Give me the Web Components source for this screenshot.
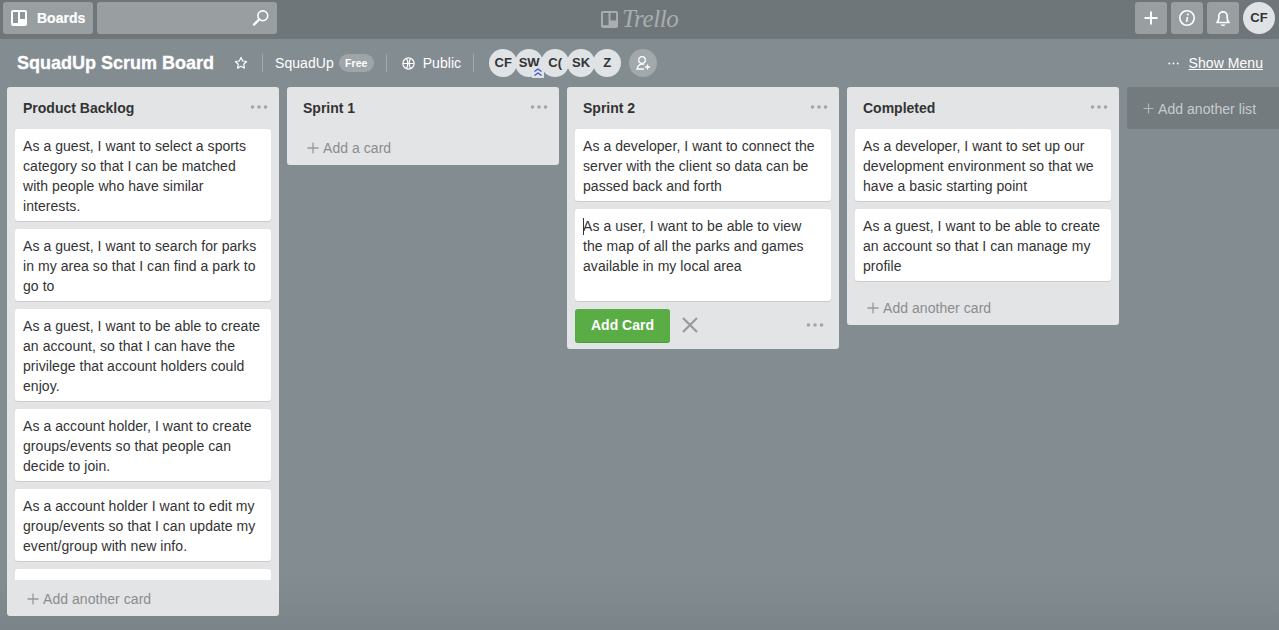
<!DOCTYPE html>
<html lang="en"><head><meta charset="utf-8"><title>SquadUp Scrum Board</title>
<style>
html,body{margin:0;padding:0;height:100%}
body{width:1279px;height:630px;overflow:hidden;background:#838c91;font:14px/20px "Liberation Sans",Arial,sans-serif;color:#333;display:flex;flex-direction:column}
</style></head><body>
<top-bar></top-bar>
<board-header></board-header>
<board-canvas>
  <board-list name="Product Backlog" fill>
    <board-card>As a guest, I want to select a sports category so that I can be matched with people who have similar interests.</board-card>
    <board-card>As a guest, I want to search for parks in my area so that I can find a park to go to</board-card>
    <board-card>As a guest, I want to be able to create an account, so that I can have the privilege that account holders could enjoy.</board-card>
    <board-card>As a account holder, I want to create groups/events so that people can decide to join.</board-card>
    <board-card>As a account holder I want to edit my group/events so that I can update my event/group with new info.</board-card>
    <board-card blank></board-card>
  </board-list>
  <board-list name="Sprint 1" add="Add a card"></board-list>
  <board-list name="Sprint 2" composing>
    <board-card>As a developer, I want to connect the server with the client so data can be passed back and forth</board-card>
    <board-card editing>As a user, I want to be able to view the map of all the parks and games available in my local area</board-card>
  </board-list>
  <board-list name="Completed">
    <board-card>As a developer, I want to set up our development environment so that we have a basic starting point</board-card>
    <board-card>As a guest, I want to be able to create an account so that I can manage my profile</board-card>
  </board-list>
  <add-list></add-list>
</board-canvas>
<script>
function el(name, css, html){
  customElements.define(name, class extends HTMLElement{
    constructor(){super();this.attachShadow({mode:'open'});}
    connectedCallback(){
      const h = typeof html==='function'?html(this):html;
      this.shadowRoot.innerHTML='<style>'+css+'</style>'+h;
    }
  });
}
el('user-avatar',`
:host{display:flex;align-items:center;justify-content:center;box-sizing:border-box;width:var(--s,28px);height:var(--s,28px);border-radius:50%;background:#dfe3e6;color:#333;font:700 13px/20px "Liberation Sans",sans-serif;position:relative;flex:none}
svg{position:absolute;right:-1px;bottom:-1px;width:12px;height:12px}
`,t=>`<span>${t.getAttribute('i')}</span>`+(t.hasAttribute('admin')?`<svg viewBox="0 0 12 12" fill="none" stroke="#3d4fc4" stroke-width="1.2"><rect width="12" height="12" fill="#dfe3e6" stroke="none"/><path d="M2.5 5.5 6 3l3.5 2.5M2.5 9.5 6 7l3.5 2.5"/></svg>`:''));

el('top-bar',`
:host{display:flex;align-items:center;flex:none;box-sizing:border-box;height:39px;padding:0 4px 4px 3px;background:#6e7679;gap:4px;position:relative;color:#fff}
.btn{display:flex;align-items:center;justify-content:center;height:32px;width:32px;border-radius:3px;background:rgba(255,255,255,.3);flex:none}
.boards{width:90px;justify-content:flex-start;box-sizing:border-box;padding-left:8px;gap:10px;font:700 14px/20px "Liberation Sans",sans-serif;-webkit-text-stroke:.2px #fff}
.search{width:180px;justify-content:flex-end;box-sizing:border-box;padding-right:7px}
.logo{position:absolute;left:601px;top:6px;display:flex;align-items:center;gap:4px;color:rgba(255,255,255,.42);font:italic 400 25px/26px "Liberation Serif",serif;letter-spacing:-.4px}
.spacer{flex:1}
svg{display:block}
user-avatar{--s:32px}
`,`
<div class="btn boards"><svg width="16" height="16" viewBox="0 0 16 16"><rect width="16" height="16" rx="2" fill="#fff"/><rect x="2" y="2" width="5" height="11" fill="#8e9699"/><rect x="9" y="2" width="5" height="7" fill="#8e9699"/></svg><span>Boards</span></div>
<div class="btn search"><svg width="18" height="18" viewBox="0 0 18 18" fill="none" stroke="#fff"><circle cx="10.8" cy="6.8" r="4.9" stroke-width="1.6"/><path d="M7.2 10.4 2 15.6" stroke-width="2.2" stroke-linecap="round"/></svg></div>
<div class="logo"><svg width="17" height="17" viewBox="0 0 18 18"><rect width="18" height="18" rx="2" fill="currentColor"/><rect x="2" y="2" width="6" height="13" fill="#6e7679"/><rect x="10" y="2" width="6" height="8" fill="#6e7679"/></svg><span>Trello</span></div>
<div class="spacer"></div>
<div class="btn"><svg width="16" height="16" viewBox="0 0 16 16"><path d="M8 1.500v13M1.500 8h13" stroke="#fff" stroke-width="2" fill="none"/></svg></div>
<div class="btn"><svg width="18" height="18" viewBox="0 0 18 18" fill="none" stroke="#fff"><circle cx="9" cy="9" r="7.200" stroke-width="1.600"/><path d="M9.500 8 8.600 12.800" stroke-width="1.600"/><circle cx="9.900" cy="5.600" r="1" fill="#fff" stroke="none"/></svg></div>
<div class="btn"><svg width="16" height="18" viewBox="0 0 16 18" fill="none" stroke="#fff" stroke-width="1.700"><path d="M2 13.500c1.300-1 1.800-2.400 1.800-4.500V7a4.200 4.200 0 0 1 8.400 0v2c0 2.100.5 3.500 1.800 4.500z" stroke-linejoin="round"/><path d="M6.300 15.500c.4 1 3 1 3.400 0" stroke-width="1.500"/></svg></div>
<user-avatar i="CF"></user-avatar>
`);

el('board-header',`
:host{display:flex;align-items:center;flex:none;height:48px;color:#fff;font:14px/20px "Liberation Sans",sans-serif;letter-spacing:.05px}
h1{margin:0 0 0 17px;font:700 18px/24px "Liberation Sans",sans-serif;width:197px;white-space:nowrap;letter-spacing:0;-webkit-text-stroke:.3px #fff}
.star{margin-left:20px;width:14px;height:14px;display:block}
.div{width:1px;height:18px;background:rgba(255,255,255,.25);flex:none}
.team{margin-left:12px}
.free{margin-left:5px;width:35px;height:18px;border-radius:9px;background:rgba(255,255,255,.22);font:700 10.5px/18px "Liberation Sans",sans-serif;text-align:center}
.globe{margin:0 8px 0 15px;display:block}
.avatars{display:flex;margin-left:15px}
.avatars user-avatar+user-avatar{margin-left:-2px}
.addm{margin-left:8px;width:28px;height:28px;border-radius:50%;background:rgba(255,255,255,.25);display:flex;align-items:center;justify-content:center}
.spacer{flex:1}
.more{margin-right:10px;display:block}
.menu{margin-right:16px;text-decoration:underline}
`,`
<h1>SquadUp Scrum Board</h1>
<svg class="star" viewBox="0 0 14 14" fill="none" stroke="#fff" stroke-width="1.200"><path d="M7 1.400 8.700 5l3.900.5-2.900 2.700.8 3.900L7 10.200l-3.500 1.900.8-3.900L1.400 5.500 5.300 5z" stroke-linejoin="round"/></svg>
<div class="div" style="margin-left:14px"></div>
<span class="team">SquadUp</span><span class="free">Free</span>
<div class="div" style="margin-left:12px"></div>
<svg class="globe" width="13" height="13" viewBox="0 0 13 13" fill="none" stroke="#fff" stroke-width="1.200"><circle cx="6.500" cy="6.500" r="5.600"/><path d="M.9 6.500h11.200M4.500 1.300c1.500 3 1.500 7.400 0 10.400M8.500 1.300c-1.500 3-1.500 7.400 0 10.400"/></svg>
<span>Public</span>
<div class="div" style="margin-left:12px"></div>
<div class="avatars"><user-avatar i="CF"></user-avatar><user-avatar i="SW" admin></user-avatar><user-avatar i="C("></user-avatar><user-avatar i="SK"></user-avatar><user-avatar i="Z"></user-avatar></div>
<div class="addm"><svg width="16" height="16" viewBox="0 0 16 16" fill="none" stroke="#fff" stroke-width="1.300"><circle cx="7" cy="5" r="3.300"/><path d="M9 9.500c-3.500-1.500-6 .5-7 4.500h7M12.500 9.500v5M10 12h5"/></svg></div>
<div class="spacer"></div>
<svg class="more" width="11" height="3" viewBox="0 0 11 3" fill="#fff"><circle cx="1.300" cy="1.500" r=".9"/><circle cx="5.500" cy="1.500" r=".9"/><circle cx="9.700" cy="1.500" r=".9"/></svg><span class="menu">Show Menu</span>
`);

el('board-canvas',`
:host{display:flex;align-items:flex-start;flex:1;min-height:0;gap:8px;padding:0 0 14px 7px;overflow:hidden;background:linear-gradient(#838c91 0,#838c91 90%,#7b8489 100%)}
`,`<slot></slot>`);

const dots='<svg width="18" height="4" viewBox="0 0 18 4" fill="#a3a6a8"><circle cx="2.500" cy="2" r="1.800"/><circle cx="9" cy="2" r="1.800"/><circle cx="15.500" cy="2" r="1.800"/></svg>';
const plus='<svg width="12" height="12" viewBox="0 0 12 12"><path d="M6 .5v11M.5 6h11" stroke="#999" stroke-width="1.300"/></svg>';

el('board-list',`
:host{display:flex;flex-direction:column;flex:none;width:272px;box-sizing:border-box;max-height:100%;background:#e2e4e6;border-radius:3px;color:#333}
:host([fill]){height:529px}
.head{flex:none;height:42px;box-sizing:border-box;padding:11px 11px 0 16px;display:flex;justify-content:space-between;font:700 14px/20px "Liberation Sans",sans-serif}
.head svg{margin-top:7px}
.cards{display:flex;flex-direction:column;gap:8px;padding:0 8px 8px;overflow:hidden;flex:1;min-height:0}
:host([fill]) .cards{padding-bottom:0}
.foot{flex:none;height:36px;box-sizing:border-box;padding:9px 8px 0 20px;display:flex;align-items:flex-start;gap:4px;color:#8c8c8c;line-height:20px;letter-spacing:.05px}
.foot svg{margin-top:4px}
.comp{flex:none;height:40px;box-sizing:border-box;padding:0 15px 0 8px;display:flex;align-items:flex-start}
.add{width:95px;height:33px;border-radius:3px;background:#5aac44;color:#fff;font:700 14px/32px "Liberation Sans",sans-serif;text-align:center;box-shadow:0 1px 0 #4c9a38}
.x{margin:8px 0 0 12px;display:block}
.sp{flex:1}
.d{margin-top:14px;display:block}
`,t=>`
<div class="head"><span>${t.getAttribute('name')}</span>${dots}</div>
${t.hasAttribute('composing')
 ?`<div class="cards" style="flex:none"><slot></slot></div><div class="comp"><div class="add">Add Card</div><svg class="x" width="16" height="16" viewBox="0 0 16 16"><path d="M1 1l14 14M15 1 1 15" stroke="#999" stroke-width="2.200"/></svg><div class="sp"></div><svg class="d" width="18" height="4" viewBox="0 0 18 4" fill="#a3a6a8"><circle cx="2.500" cy="2" r="1.800"/><circle cx="9" cy="2" r="1.800"/><circle cx="15.500" cy="2" r="1.800"/></svg></div>`
 :`<div class="cards"${t.children.length?'':' style="display:none"'}><slot></slot></div><div class="foot">${plus}<span>${t.getAttribute('add')||'Add another card'}</span></div>`}
`);

el('board-card',`
:host{display:block;flex:none;box-sizing:border-box;background:#fff;border-radius:3px;padding:7px 8px 5px;min-height:40px;box-shadow:0 1px 0 #ccc;color:#333;font:14px/20px "Liberation Sans",sans-serif;letter-spacing:.055px}
:host([editing]){min-height:92px;position:relative}
.caret{position:absolute;left:8px;top:9px;width:1px;height:17px;background:#333}
`,t=>(t.hasAttribute('editing')?'<div class="caret"></div>':'')+'<slot></slot>');

el('add-list',`
:host{display:flex;align-items:flex-start;flex:none;width:160px;height:42px;box-sizing:border-box;padding:12px 0 0 16px;gap:4px;background:rgba(0,0,0,.12);border-radius:3px;color:rgba(255,255,255,.62);font:14px/20px "Liberation Sans",sans-serif;letter-spacing:.05px}
svg{margin-top:4px}
`,'<svg width="11" height="11" viewBox="0 0 12 12"><path d="M6 .5v11M.5 6h11" stroke="rgba(255,255,255,.45)" stroke-width="1.300"/></svg><span>Add another list</span>');
</script>
</body></html>
